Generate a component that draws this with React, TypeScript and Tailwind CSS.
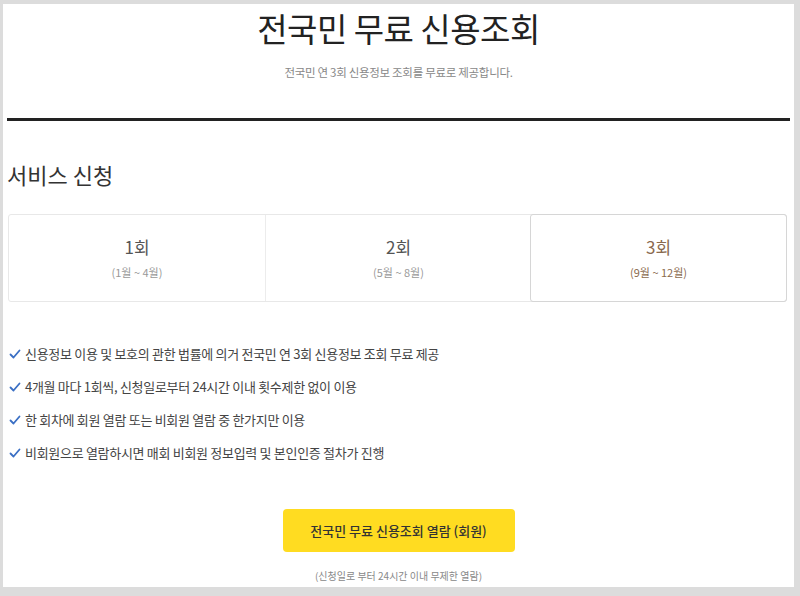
import React from 'react';

const rounds = [
    { title: '1회', range: '(1월 ~ 4월)', active: false },
    { title: '2회', range: '(5월 ~ 8월)', active: false },
    { title: '3회', range: '(9월 ~ 12월)', active: true },
];

const notes = [
    '신용정보 이용 및 보호의 관한 법률에 의거 전국민 연 3회 신용정보 조회 무료 제공',
    '4개월 마다 1회씩, 신청일로부터 24시간 이내 횟수제한 없이 이용',
    '한 회차에 회원 열람 또는 비회원 열람 중 한가지만 이용',
    '비회원으로 열람하시면 매회 비회원 정보입력 및 본인인증 절차가 진행',
];

const Check = () => (
    <svg width="12" height="12" viewBox="0 0 12 12" className="shrink-0">
        <path d="M1.5 6.5 L4.5 9.5 L10.5 2.5" fill="none" stroke="#3a6fc4" strokeWidth="1.8" strokeLinecap="round" strokeLinejoin="round" />
    </svg>
);

export default function App() {
    return (
        <div
            className="w-[800px] h-[596px] bg-[#dcdcdc] pl-[3px] pt-[4px] pr-[6px] pb-[9px] overflow-hidden"
            style={{ fontFamily: '"Noto Sans CJK KR", "Noto Sans", sans-serif' }}
        >
            <div className="h-full bg-white flex flex-col px-[4px]">
                {/* Header */}
                <div className="flex flex-col items-center">
                    <h1 className="text-[33px] leading-[40px] mt-[4px] text-[#222] font-normal tracking-[-0.5px]">전국민 무료 신용조회</h1>
                    <p className="text-[11.5px] leading-[16px] mt-[16px] text-[#888] tracking-[-0.3px]">전국민 연 3회 신용정보 조회를 무료로 제공합니다.</p>
                </div>
                <div className="h-[3px] bg-[#222] mt-[38px]" />

                {/* Service */}
                <h2 className="text-[22px] leading-[30px] mt-[38px] text-[#333] font-normal">서비스 신청</h2>
                <div className="mt-[25px] ml-[1px] mr-[3px] grid grid-cols-[257px_265px_1fr] h-[88px] border border-[#e8e8e8] rounded-[3px]">
                    {rounds.map((r, i) => (
                        <div
                            key={r.title}
                            className={
                                r.active
                                    ? 'flex flex-col items-center justify-center border border-[#d6d6d6] rounded-[3px] -m-[1px]'
                                    : i === 0
                                        ? 'flex flex-col items-center justify-center border-r border-[#ececec]'
                                        : 'flex flex-col items-center justify-center'
                            }
                        >
                            <span className={r.active ? 'text-[17px] leading-[22px] text-[#8a6a4e]' : 'text-[17px] leading-[22px] text-[#555]'}>{r.title}</span>
                            <span className={r.active ? 'text-[11px] leading-[16px] mt-[6px] text-[#8a6a4e]' : 'text-[11px] leading-[16px] mt-[6px] text-[#999]'}>{r.range}</span>
                        </div>
                    ))}
                </div>

                {/* Notes */}
                <ul className="mt-[42px] flex flex-col gap-[13px] pl-[2px]">
                    {notes.map((n) => (
                        <li key={n} className="flex items-center gap-[4px] h-[20px] text-[13px] text-[#444] tracking-[-0.3px]">
                            <Check />
                            <span>{n}</span>
                        </li>
                    ))}
                </ul>

                {/* Action */}
                <div className="flex flex-col items-center mt-[46px]">
                    <button className="w-[232px] h-[43px] bg-[#ffdc21] rounded-[4px] text-[13px] font-medium text-[#333]">
                        전국민 무료 신용조회 열람 (회원)
                    </button>
                    <p className="text-[10px] leading-[14px] mt-[17px] text-[#888]">(신청일로 부터 24시간 이내 무제한 열람)</p>
                </div>
            </div>
        </div>
    );
}
